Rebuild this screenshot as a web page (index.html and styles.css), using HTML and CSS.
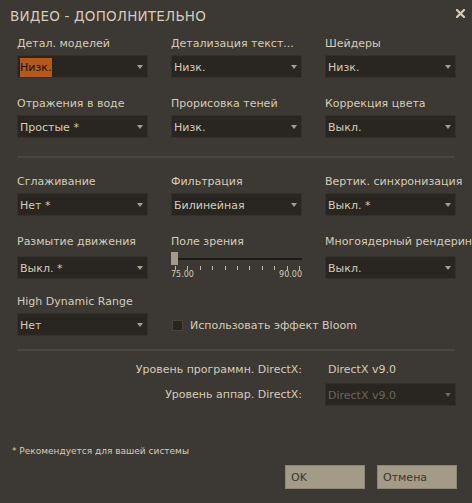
FILE: index.html
```html
<!DOCTYPE html>
<html lang="ru">
<head>
<meta charset="utf-8">
<title>Видео - дополнительно</title>
<link rel="stylesheet" href="styles.css">
</head>
<body>
<div class="dialog">
  <header class="titlebar">
    <h1 class="title">ВИДЕО - ДОПОЛНИТЕЛЬНО</h1>
    <button class="close" aria-label="Закрыть">
      <svg width="9" height="9" viewBox="0 0 9 9"><path d="M1 1L8 8M8 1L1 8" stroke="#d5cdb8" stroke-width="2.2" stroke-linecap="square"/></svg>
    </button>
  </header>

  <section class="grid">
    <div class="field">
      <div class="label">Детал. моделей</div>
      <div class="select"><span class="value value--selected">Низк.</span><span class="arrow"></span></div>
    </div>
    <div class="field">
      <div class="label">Детализация текст...</div>
      <div class="select"><span class="value">Низк.</span><span class="arrow"></span></div>
    </div>
    <div class="field">
      <div class="label">Шейдеры</div>
      <div class="select"><span class="value">Низк.</span><span class="arrow"></span></div>
    </div>
    <div class="field">
      <div class="label">Отражения в воде</div>
      <div class="select"><span class="value">Простые *</span><span class="arrow"></span></div>
    </div>
    <div class="field">
      <div class="label">Прорисовка теней</div>
      <div class="select"><span class="value">Низк.</span><span class="arrow"></span></div>
    </div>
    <div class="field">
      <div class="label">Коррекция цвета</div>
      <div class="select"><span class="value">Выкл.</span><span class="arrow"></span></div>
    </div>
  </section>

  <hr class="sep sep--first">

  <section class="grid">
    <div class="field">
      <div class="label">Сглаживание</div>
      <div class="select"><span class="value">Нет *</span><span class="arrow"></span></div>
    </div>
    <div class="field">
      <div class="label">Фильтрация</div>
      <div class="select"><span class="value">Билинейная</span><span class="arrow"></span></div>
    </div>
    <div class="field">
      <div class="label">Вертик. синхронизация</div>
      <div class="select"><span class="value">Выкл. *</span><span class="arrow"></span></div>
    </div>

    <div class="field field--low">
      <div class="label">Размытие движения</div>
      <div class="select"><span class="value">Выкл. *</span><span class="arrow"></span></div>
    </div>
    <div class="field">
      <div class="label">Поле зрения</div>
      <div class="slider">
        <div class="slider-track"><div class="slider-thumb"></div></div>
        <div class="ticks">
          <i></i><i></i><i></i><i></i><i></i><i></i><i></i><i></i><i></i><i></i><i></i>
        </div>
        <div class="scale"><span>75.00</span><span>90.00</span></div>
      </div>
    </div>
    <div class="field field--low">
      <div class="label">Многоядерный рендеринг</div>
      <div class="select"><span class="value">Выкл.</span><span class="arrow"></span></div>
    </div>

    <div class="field">
      <div class="label">High Dynamic Range</div>
      <div class="select"><span class="value">Нет</span><span class="arrow"></span></div>
    </div>
    <div class="field field--check">
      <label class="check"><span class="checkbox"></span><span class="check-label">Использовать эффект Bloom</span></label>
    </div>
  </section>

  <hr class="sep sep--second">

  <section class="info">
    <div class="info-label">Уровень программн. DirectX:</div>
    <div class="info-value">DirectX v9.0</div>
    <div class="info-label info-label--mid">Уровень аппар. DirectX:</div>
    <div class="select select--disabled"><span class="value">DirectX v9.0</span><span class="arrow"></span></div>
  </section>

  <p class="note">* Рекомендуется для вашей системы</p>

  <footer class="actions">
    <button class="btn">OK</button>
    <button class="btn">Отмена</button>
  </footer>
</div>
</body>
</html>
```

FILE: styles.css
```css
html, body {
  margin: 0;
  padding: 0;
  background: #3c3834;
}

.dialog {
  width: 472px;
  height: 503px;
  overflow: hidden;
  background: #3c3834;
  color: #d5cdb8;
  font-family: "DejaVu Sans", Verdana, sans-serif;
  font-size: 11px;
}

.titlebar {
  height: 36px;
  box-sizing: border-box;
  display: flex;
  justify-content: space-between;
  align-items: flex-start;
  padding: 0 7px 0 10px;
}

.title {
  margin: 0;
  padding-top: 8px;
  font-size: 13.5px;
  line-height: 16px;
  letter-spacing: 0.2px;
  font-weight: normal;
  color: #d5cdb8;
}

.close {
  margin: 9px 0 0 0;
  padding: 0;
  border: 0;
  background: none;
  width: 9px;
  height: 9px;
  display: block;
}
.close svg { display: block; }

.grid {
  display: grid;
  grid-template-columns: repeat(3, 131px);
  grid-auto-rows: 42px;
  column-gap: 23px;
  row-gap: 18px;
  padding-left: 17px;
}

.field {
  min-width: 0;
}

.label {
  line-height: 15px;
  white-space: nowrap;
}

.select {
  margin-top: 4px;
  height: 23px;
  box-sizing: border-box;
  border: 1px solid #34302c;
  background: #292521;
  padding: 2px 4px 0 2px;
  display: flex;
  align-items: center;
  justify-content: space-between;
}

.field--low .select {
  margin-top: 7px;
}

.value {
  line-height: 19px;
  white-space: nowrap;
  color: #d5cdb8;
}

.value--selected {
  background: #b5581c;
  color: #17120e;
  padding-right: 1px;
}

.arrow {
  width: 0;
  height: 0;
  margin-top: -2px;
  border-left: 3.5px solid transparent;
  border-right: 3.5px solid transparent;
  border-top: 4px solid #a69e8b;
}

/* slider */
.slider {
  margin-top: 2px;
  width: 131px;
}

.slider-track {
  height: 14px;
  background: linear-gradient(#1e1b18, #1e1b18) 0 7px / 100% 2px no-repeat;
  overflow: hidden;
}

.slider-thumb {
  width: 7px;
  height: 13px;
  margin-top: 1px;
  background: #a39b87;
}

.ticks {
  display: flex;
  justify-content: space-between;
  height: 4px;
  margin-top: 1px;
  padding: 0 2px 0 4px;
}

.ticks i {
  display: block;
  width: 1px;
  height: 4px;
  background: #c4bca8;
}

.scale {
  display: flex;
  justify-content: space-between;
  font-size: 8px;
  line-height: 10px;
  color: #d5cdb8;
}

/* checkbox */
.field--check {
  grid-column: 2 / span 2;
  padding-top: 20px;
}

.check {
  display: flex;
  align-items: center;
  height: 23px;
  gap: 7px;
  padding-left: 1px;
}

.checkbox {
  width: 11px;
  height: 11px;
  box-sizing: border-box;
  border: 1px solid #48433d;
  background: #292521;
}

.check-label {
  line-height: 15px;
  white-space: nowrap;
}

/* separators */
.sep {
  border: 0;
  height: 2px;
  background: #4b463f;
  margin: 0 17px;
}
.sep--first {
  margin-top: 18px;
  margin-bottom: 16px;
}
.sep--second {
  margin-top: 13px;
  margin-bottom: 11px;
}

/* info */
.info {
  display: grid;
  grid-template-columns: 285px 131px;
  column-gap: 23px;
  row-gap: 6px;
  padding-left: 17px;
}

.info-label {
  text-align: right;
  line-height: 15px;
  white-space: nowrap;
}

.info-label--mid {
  align-self: center;
}

.info-value {
  line-height: 15px;
  padding-left: 3px;
}

.info .select {
  margin-top: 0;
}

.select--disabled .value {
  color: #6b655b;
}
.select--disabled .arrow {
  border-top-color: #6b655b;
}

/* footer */
.note {
  margin: 40px 0 0 0;
  padding-left: 12px;
  font-size: 9px;
  line-height: 11px;
}

.actions {
  display: flex;
  justify-content: flex-end;
  gap: 12px;
  margin-top: 8px;
  padding-right: 15px;
}

.btn {
  width: 80px;
  height: 24px;
  box-sizing: border-box;
  border: 1px solid #8d8672;
  background: #a39b87;
  color: #3a3631;
  font-family: "DejaVu Sans", Verdana, sans-serif;
  font-size: 11px;
  line-height: 20px;
  padding: 2px 0 0 5px;
  text-align: left;
}
```
